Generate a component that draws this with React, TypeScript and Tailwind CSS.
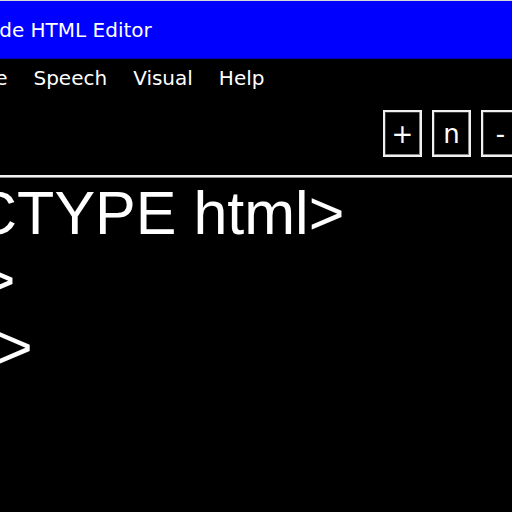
import React from 'react';

const menus = ['File', 'Speech', 'Visual', 'Help'];
const tools = ['+', 'n', '-', 'x'];
const code = ['<!DOCTYPE html>', '<html>', '<body>'];

const ToolButton: React.FC<{ label: string }> = ({ label }) => (
  <button className="flex h-[47px] w-[39px] shrink-0 items-center justify-center border-2 border-[#f0f0f0] bg-black text-[26px] leading-none text-white shadow-[inset_-1px_-1px_0_#8a8a8a,inset_1px_1px_0_#3a3a3a]">
    {label}
  </button>
);

export default function App() {
  return (
    <div className="h-[512px] w-[512px] overflow-hidden bg-black border-t border-[#d8d8d8] font-['DejaVu_Sans',sans-serif]">
      <div className="flex h-[58px] items-center overflow-hidden bg-[#0000ff] border-b border-[#0000b8]">
        <span className="ml-[-27px] whitespace-nowrap text-[20px] text-white">Code HTML Editor</span>
      </div>

      <nav className="flex h-[37px] items-center overflow-hidden">
        <div className="ml-[-26px] flex gap-[26px] whitespace-nowrap text-[20px] text-white">
          {menus.map((m) => (
            <span key={m}>{m}</span>
          ))}
        </div>
      </nav>

      <div className="flex justify-end gap-[10px] overflow-hidden pt-[14px] mr-[-57px]">
        {tools.map((t) => (
          <ToolButton key={t} label={t} />
        ))}
      </div>

      <div className="mt-[18px] h-[3px] border-t-2 border-[#f2f2f2] bg-[#8c8c8c]" />

      <div className="overflow-hidden pt-[2px]">
        <div className="ml-[-171px] font-['Liberation_Sans',Arial,sans-serif] text-[61px] leading-[67px] text-white whitespace-pre">
          {code.map((line, i) => (
            <div key={i}>{line}</div>
          ))}
        </div>
      </div>
    </div>
  );
}
